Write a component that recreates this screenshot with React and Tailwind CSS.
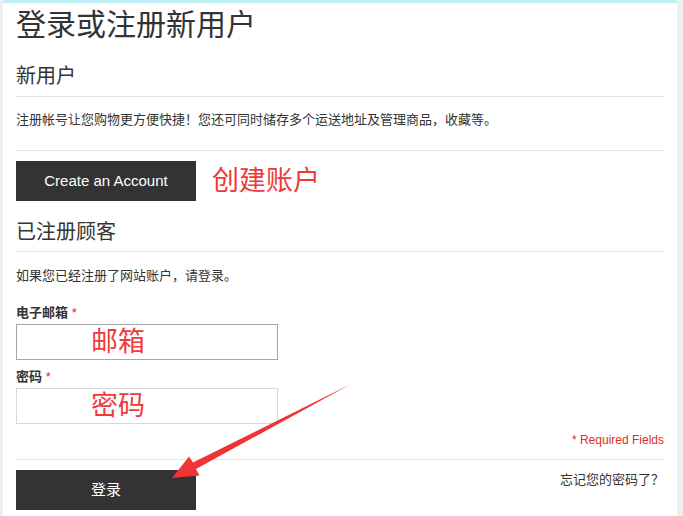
import React from 'react';

const font = { fontFamily: '"Liberation Sans", "Noto Sans CJK SC", sans-serif' };

const Arrow = () => (
    <svg className="absolute inset-0 pointer-events-none" width="683" height="516" viewBox="0 0 683 516">
        <polygon
            points="351,384 193,462.5 189,456.5 172,478 199.5,475.5 196,469"
            fill="#ee3434"
        />
    </svg>
);

const Field = ({ label, hint, dark, first }) => (
    <>
        <label className={`block text-[13px] leading-[18px] font-bold text-[#333] ${first ? '' : 'mt-[8px]'}`}>
            {label} <span className="text-[#e02b27] font-normal">*</span>
        </label>
        <div
            className={`mt-[2px] w-[262px] h-[36px] border flex items-center pl-[74px] text-[27px] text-[#ee3a3a] ${dark ? 'border-[#a6a6a6]' : 'border-[#d8d8d8]'}`}
        >
            {hint}
        </div>
    </>
);

export default function App() {
    return (
        <div className="relative w-[683px] h-[516px] overflow-hidden bg-[#efefef]" style={font}>
            <div className="ml-[3px] w-[674px] h-full bg-white border-t-[3px] border-[#bdeff4] px-[13px] text-[#333]">
                <h1 className="mt-[4px] text-[30px] leading-[36px] font-normal">登录或注册新用户</h1>

                {/* 新用户 */}
                <h2 className="mt-[21px] pb-[8px] border-b border-[#e3e3e3] text-[20px] leading-[24px]">新用户</h2>
                <div className="border-b border-[#e3e3e3]">
                    <p className="mt-[13px] mb-[20px] text-[13px] leading-[20px]">
                        注册帐号让您购物更方便快捷！您还可同时储存多个运送地址及管理商品，收藏等。
                    </p>
                </div>
                <div className="mt-[10px] flex items-center gap-[16px]">
                    <button className="w-[180px] h-[40px] bg-[#333] text-white text-[15px]">Create an Account</button>
                    <span className="text-[27px] leading-[32px] text-[#ee3a3a]">创建账户</span>
                </div>

                {/* 已注册顾客 */}
                <h2 className="mt-[19px] pb-[7px] border-b border-[#e3e3e3] text-[20px] leading-[24px]">已注册顾客</h2>
                <p className="mt-[14px] text-[13px] leading-[20px]">如果您已经注册了网站账户，请登录。</p>

                <div className="mt-[18px]">
                    <Field label="电子邮箱" hint="邮箱" dark first />
                    <Field label="密码" hint="密码" />
                </div>

                <div className="border-b border-[#e3e3e3] pb-[10px]">
                    <p className="mt-[7px] text-right text-[12px] leading-[18px] text-[#e02b27]">* Required Fields</p>
                </div>

                <div className="mt-[10px] flex justify-between items-start">
                    <button className="w-[180px] h-[40px] bg-[#333] text-white text-[15px]">登录</button>
                    <a className="text-[13px] leading-[20px] text-[#333]">忘记您的密码了？</a>
                </div>
            </div>
            <Arrow />
        </div>
    );
}
